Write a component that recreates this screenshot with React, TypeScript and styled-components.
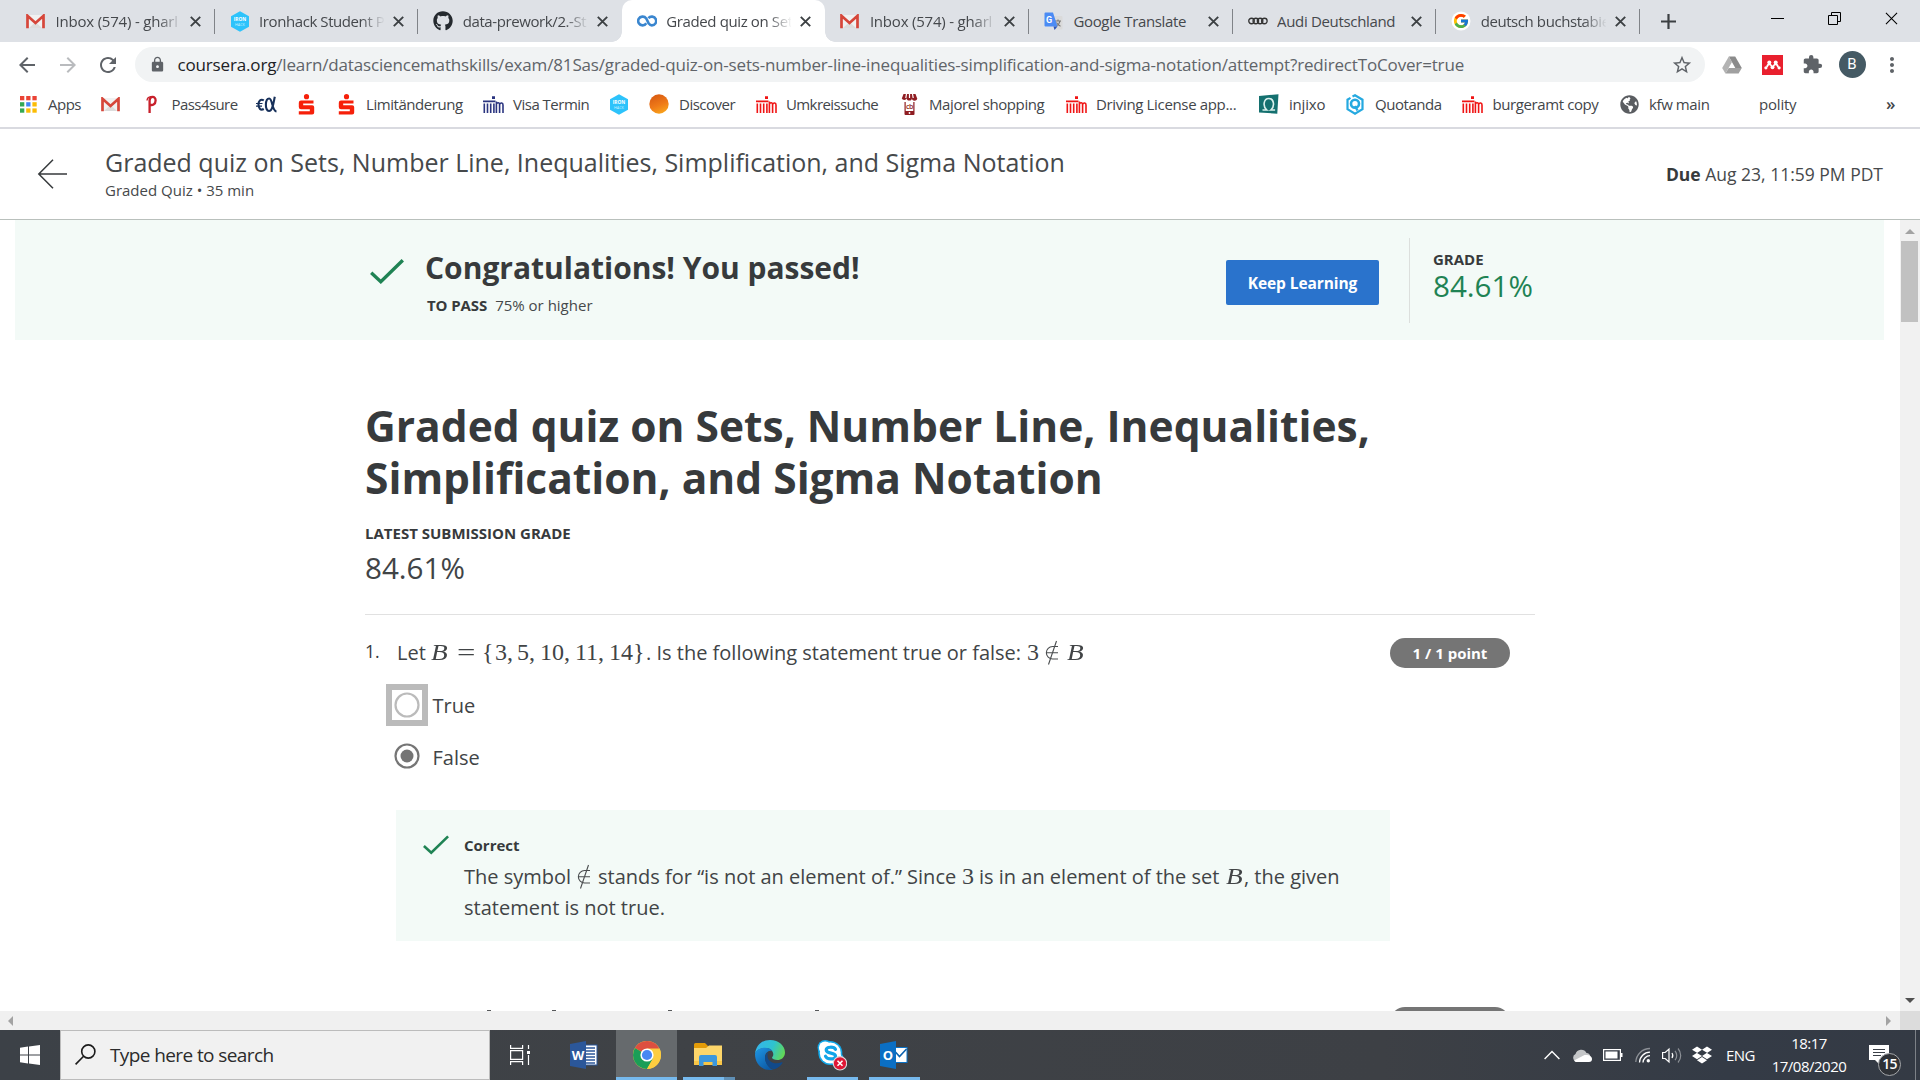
import React from "react";
import styled, { createGlobalStyle, css } from "styled-components";
import { FaGithub, FaDropbox, FaGlobeAmericas } from "react-icons/fa";
import { FcGoogle } from "react-icons/fc";
import { MdExtension, MdLock, MdStarBorder, MdRefresh, MdArrowBack, MdArrowForward, MdMoreVert } from "react-icons/md";

const GlobalStyle = createGlobalStyle`
  * { box-sizing: border-box; }
  html, body { margin: 0; padding: 0; overflow: hidden; background: #fff; }
  body { font-family: "Open Sans", "Noto Sans", sans-serif; color: #373a3c; }
  svg { display: block; flex: none; }
`;

const Screen = styled.div`
  width: 1920px;
  height: 1080px;
  display: flex;
  flex-direction: column;
  overflow: hidden;
`;

/* ---------- browser chrome ---------- */

const TabStrip = styled.div`
  display: flex;
  height: 42px;
  padding-left: 11px;
  background: #dee1e6;
  flex: none;
`;

const Tab = styled.div<{ $active?: boolean; $divider?: boolean }>`
  position: relative;
  display: flex;
  align-items: center;
  width: 203.6px;
  height: 42px;
  padding: 0 14px 0 15px;
  ${(p) =>
    p.$divider &&
    css`
      &::after {
        content: "";
        position: absolute;
        right: 0;
        top: 9px;
        width: 1px;
        height: 25px;
        background: #808388;
      }
    `}
  ${(p) =>
    p.$active &&
    css`
      background: #fff;
      border-radius: 10px 10px 0 0;
      &::before,
      &::after {
        content: "";
        position: absolute;
        bottom: 0;
        width: 10px;
        height: 10px;
      }
      &::before {
        left: -10px;
        background: radial-gradient(circle at 0 0, transparent 9.5px, #fff 10px);
      }
      &::after {
        right: -10px;
        background: radial-gradient(circle at 100% 0, transparent 9.5px, #fff 10px);
      }
    `}
`;

const TabIcon = styled.span`
  display: flex;
  width: 20px;
`;

const TabTitle = styled.span<{ $ls: number; $fade?: boolean }>`
  width: 125px;
  margin-left: 9.5px;
  overflow: hidden;
  white-space: nowrap;
  font-size: 15px;
  line-height: 24px;
  letter-spacing: ${(p) => p.$ls}px;
  color: #45484c;
  ${(p) => p.$fade && "mask-image: linear-gradient(90deg, #000 102px, transparent 126px);"}
`;

const TabClose = styled.div`
  margin-left: auto;
`;

const NewTab = styled.div`
  display: flex;
  align-items: center;
  width: 56px;
  padding-left: 21px;
`;

const WindowControls = styled.div`
  display: flex;
  margin-left: auto;
  height: 37px;
`;

const WindowButton = styled.div`
  display: flex;
  align-items: center;
  justify-content: center;
  width: 57px;
`;

const Toolbar = styled.div`
  display: flex;
  align-items: center;
  height: 45px;
  padding: 0 8px 0 15px;
  flex: none;
  color: #5f6368;
`;

const NavIcons = styled.div`
  display: flex;
  gap: 16.5px;
  width: 120px;
`;

const Omnibox = styled.div`
  display: flex;
  align-items: center;
  width: 1570px;
  height: 35px;
  padding: 0 12px 0 14px;
  border-radius: 18px;
  background: #f1f3f4;
`;

const Url = styled.div`
  flex: 1;
  margin-left: 11.5px;
  font-size: 17px;
  line-height: 26px;
  letter-spacing: -0.16px;
  white-space: nowrap;
  color: #606469;
  b {
    font-weight: 400;
    color: #202124;
  }
`;

const Extensions = styled.div`
  display: grid;
  grid-template-columns: repeat(5, 40px);
  align-items: center;
  justify-items: center;
  margin-left: 7px;
`;

const Avatar = styled.div`
  width: 27px;
  height: 27px;
  border-radius: 50%;
  background: #455a64;
  color: #fff;
  font: 15px/27px Roboto, sans-serif;
  text-align: center;
`;

const Bookmarks = styled.div`
  display: flex;
  align-items: center;
  height: 42px;
  padding: 0 0 6px 18px;
  border-bottom: 2px solid #d9dae0;
  flex: none;
`;

const Bookmark = styled.div<{ $w: number; $ls: number }>`
  display: flex;
  align-items: center;
  gap: 10px;
  width: ${(p) => p.$w}px;
  flex: none;
  font-size: 15px;
  line-height: 24px;
  letter-spacing: ${(p) => p.$ls}px;
  color: #43464a;
  white-space: nowrap;
`;

const BookmarkIcon = styled.span`
  display: flex;
  justify-content: center;
  width: 20px;
`;

const MoreBookmarks = styled.div`
  font-size: 17px;
  line-height: 22px;
  font-weight: 600;
  color: #43464a;
`;

/* ---------- page ---------- */

const PageHeader = styled.header`
  display: flex;
  align-items: center;
  height: 91px;
  padding: 0 37px 0 37px;
  border-bottom: 1px solid #b9c0bc;
  flex: none;
`;

const HeaderTitles = styled.div`
  margin-left: 38px;
  padding-bottom: 4px;
`;

const HeaderTitle = styled.div`
  font-size: 25px;
  line-height: 34px;
  letter-spacing: -0.005px;
  color: #46494b;
  white-space: nowrap;
`;

const HeaderSub = styled.div`
  margin-top: 1px;
  font-size: 15px;
  line-height: 20px;
  color: #46494b;
`;

const Due = styled.div`
  margin-left: auto;
  font-size: 17.5px;
  line-height: 26px;
  white-space: nowrap;
  color: #46494b;
  b {
    font-weight: 700;
    color: #373a3c;
  }
`;

const Viewport = styled.div`
  display: grid;
  grid-template-columns: 1900px 20px;
  height: 791px;
  flex: none;
  overflow: hidden;
`;

const Page = styled.main`
  height: 791px;
  overflow: hidden;
`;

const Banner = styled.section`
  display: flex;
  width: 1869px;
  height: 120px;
  margin-left: 15px;
  padding-left: 355px;
  background: #f3faf7;
`;

const BannerCheck = styled.div`
  padding-top: 39px;
  width: 55px;
`;

const BannerText = styled.div`
  width: 801px;
  padding-top: 28px;
`;

const BannerTitle = styled.h2`
  margin: 0;
  font-size: 30px;
  line-height: 40px;
  font-weight: 700;
  letter-spacing: -0.01px;
`;

const PassLine = styled.div`
  display: flex;
  gap: 8px;
  margin: 7px 0 0 2px;
  font-size: 15px;
  line-height: 20px;
  b {
    font-weight: 700;
    letter-spacing: -0.1px;
  }
  span {
    color: #46494b;
  }
`;

const KeepLearning = styled.button`
  width: 153px;
  height: 45px;
  margin: 40px 30px 0 0;
  padding: 1px 0 0;
  border: 0;
  border-radius: 2px;
  background: #2a73cc;
  color: #fff;
  font: 700 15.5px/44px "Open Sans", sans-serif;
  letter-spacing: -0.08px;
  white-space: nowrap;
`;

const GradeBox = styled.div`
  height: 85px;
  margin-top: 18px;
  padding: 11px 0 0 23px;
  border-left: 1px solid #dcdfdd;
`;

const Label = styled.div`
  font-size: 15px;
  line-height: 20px;
  font-weight: 700;
  white-space: nowrap;
`;

const GradeValue = styled.div<{ $green?: boolean }>`
  font-size: 29.6px;
  line-height: 34px;
  font-weight: 400;
  color: ${(p) => (p.$green ? "#1f8354" : "#414446")};
`;

const Content = styled.section`
  width: 1170px;
  margin-left: 365px;
  padding-top: 60px;
`;

const QuizTitle = styled.h1`
  margin: 0 0 19px;
  font-size: 42.5px;
  line-height: 52px;
  font-weight: 700;
  white-space: nowrap;
`;

const Submission = styled.div`
  height: 92px;
  border-bottom: 1px solid #e1e1e1;
  ${GradeValue} {
    margin-top: 8px;
  }
`;

const QuestionRow = styled.div`
  display: flex;
  height: 31px;
  margin-top: 22px;
`;

const QuestionNumber = styled.div`
  width: 32px;
  font-size: 17.5px;
  line-height: 29px;
`;

const Line = styled.div`
  display: flex;
  align-items: baseline;
  height: 31px;
  font-size: 20px;
  line-height: 31px;
  color: #414446;
  white-space: pre;
`;

const Words = styled.span<{ $w: number }>`
  width: ${(p) => p.$w}px;
  flex: none;
`;

const MathText = styled.span<{ $w: number; $italic?: boolean; $wide?: boolean }>`
  width: ${(p) => p.$w}px;
  flex: none;
  font-family: "Liberation Serif", "DejaVu Serif", serif;
  font-size: 24px;
  line-height: 31px;
  font-style: ${(p) => (p.$italic ? "italic" : "normal")};
  ${(p) => p.$italic && "transform: scaleX(1.14); transform-origin: 0 50%;"}
  ${(p) => p.$wide && "transform: scaleX(1.36); transform-origin: 0 50%;"}
`;

const Symbol = styled.span<{ $w: number }>`
  width: ${(p) => p.$w}px;
  flex: none;
  align-self: center;
`;

const Pill = styled.div`
  width: 120px;
  height: 30px;
  margin: 1px 25px 0 auto;
  border-radius: 15px;
  background: #757575;
  color: #fff;
  font-size: 15px;
  line-height: 30px;
  font-weight: 700;
  text-align: center;
  flex: none;
`;

const Option = styled.label<{ $gap: number }>`
  display: flex;
  align-items: center;
  height: 42px;
  margin: ${(p) => p.$gap}px 0 0 21px;
  font-size: 20px;
  color: #414446;
`;

const OptionText = styled.span<{ $drop?: boolean }>`
  padding-top: ${(p) => (p.$drop ? 2 : 0)}px;
`;

const RadioFrame = styled.span<{ $focused?: boolean }>`
  display: flex;
  align-items: center;
  justify-content: center;
  width: 42px;
  height: 42px;
  margin-right: 4.5px;
  border: 6px solid ${(p) => (p.$focused ? "#bbbbbb" : "transparent")};
`;

const Feedback = styled.div`
  display: flex;
  width: 994px;
  height: 131px;
  margin: 33px 0 66px 31px;
  padding: 23px 0 0 27px;
  background: #f3faf7;
`;

const FeedbackCheck = styled.div`
  width: 41px;
  padding-top: 2px;
`;

const FeedbackTitle = styled.div`
  margin-bottom: 4px;
  font-size: 15px;
  line-height: 24px;
  font-weight: 700;
`;

const NextQuestion = styled.div`
  display: flex;
  align-items: flex-start;
  ${Pill} {
    margin-top: 0;
  }
`;

const AscenderTips = styled.div`
  display: flex;
  padding-top: 3px;
`;

const Tip = styled.span<{ $gap: number }>`
  width: 4px;
  height: 1px;
  margin-left: ${(p) => p.$gap}px;
  background: #57595b;
`;

const VScroll = styled.div`
  display: flex;
  flex-direction: column;
  align-items: center;
  padding: 9px 1px 8px 0;
  background: #f1f1f1;
`;

const VThumb = styled.div`
  width: 17px;
  height: 81px;
  margin: 7px 0 auto;
  background: #c1c1c1;
`;

const HScroll = styled.div`
  display: flex;
  align-items: center;
  justify-content: space-between;
  height: 19px;
  padding-left: 8px;
  background: #f0f0f0;
  flex: none;
`;

const ScrollCorner = styled.div`
  display: flex;
  align-items: center;
  gap: 9px;
  &::after {
    content: "";
    width: 20px;
    height: 19px;
    background: #dcdcdc;
  }
`;

/* ---------- taskbar ---------- */

const Taskbar = styled.footer`
  display: flex;
  height: 50px;
  flex: none;
  background: linear-gradient(90deg, #3c4147 0, #3f4246 35%, #3d4045 72%, #343b46 90%, #343a44 100%);
`;

const Start = styled.div`
  display: flex;
  align-items: center;
  justify-content: center;
  width: 60px;
`;

const SearchBox = styled.div`
  display: flex;
  align-items: center;
  width: 430px;
  padding: 0 0 1px 14px;
  background: #f1f1f1;
  border: 1px solid #bcbcbc;
  font-size: 19px;
  color: #2b2b2b;
  letter-spacing: -0.6px;
  span {
    margin-left: 14px;
  }
`;

const TaskItem = styled.div<{ $w: number; $active?: boolean; $open?: number }>`
  position: relative;
  display: flex;
  align-items: center;
  justify-content: center;
  width: ${(p) => p.$w}px;
  ${(p) => p.$active && "background: #666a6d;"}
  &::after {
    content: "";
    position: absolute;
    bottom: 0;
    width: ${(p) => p.$open ?? 0}px;
    height: 3px;
    background: #76b9ed;
  }
`;

const StackedEdge = styled.span`
  position: absolute;
  right: 4px;
  bottom: 0;
  width: 11px;
  height: 3px;
  background: #5f8fb5;
  z-index: 1;
`;

const Tray = styled.div`
  display: flex;
  align-items: center;
  margin-left: auto;
  color: #fff;
`;

const TrayIcon = styled.div<{ $w: number }>`
  display: flex;
  width: ${(p) => p.$w}px;
`;

const Lang = styled.div`
  width: 45px;
  font-size: 15px;
  letter-spacing: -0.6px;
`;

const Clock = styled.div`
  width: 76px;
  font-size: 15px;
  line-height: 23px;
  text-align: center;
  letter-spacing: -0.5px;
  white-space: nowrap;
`;

const Notifications = styled.div`
  position: relative;
  width: 46px;
  margin-left: 22px;
`;

const Badge = styled.span`
  position: absolute;
  left: 9px;
  top: 8px;
  width: 23px;
  height: 23px;
  border: 1px solid #a5a7aa;
  border-radius: 50%;
  background: #2f3237;
  font-size: 14px;
  line-height: 20px;
  font-weight: 600;
  letter-spacing: -0.8px;
  text-align: center;
`;

const ShowDesktop = styled.div`
  width: 5px;
  height: 50px;
  border-left: 1px solid #7d8187;
`;

/* ---------- drawings ---------- */

const Gmail = () => (
  <svg width="19" height="15" viewBox="0 0 19 15">
    <path d="M2 1h15v13H2z" fill="#f1f1f1" />
    <path d="M3 14l6.500-6L16 14z" fill="#dcdcdc" />
    <path d="M1.500 14.200V1.800L9.500 9l8-7.200v12.400" fill="none" stroke="#d6463a" strokeWidth="2.700" />
  </svg>
);

const Ironhack = () => (
  <svg width="20" height="21" viewBox="0 0 20 21">
    <path d="M10 .3l9 5v10.400l-9 5-9-5V5.300z" fill="#2dc3fb" />
    <text x="10" y="10" fontSize="4.800" fontWeight="700" textAnchor="middle" fill="#fff" fontFamily="Open Sans">IRON</text>
    <text x="10" y="14.800" fontSize="3.800" textAnchor="middle" fill="#c9f0ff" fontFamily="Open Sans">HACK</text>
  </svg>
);

const Coursera = () => (
  <svg width="20" height="12" viewBox="0 0 20 12" fill="none" stroke="#3a86cf" strokeWidth="2.600">
    <path d="M9.300 8.200C8.400 9.600 7 10.400 5.600 10.400a4.400 4.400 0 1 1 3.600-6.900c.9 1.300 1.600 3.500 2.600 5 1 1.400 2 1.900 3 1.900a4.400 4.400 0 1 0-3.400-7.200" />
  </svg>
);

const Translate = () => (
  <svg width="19" height="19" viewBox="0 0 19 19">
    <path d="M7 4h10.500a1 1 0 0 1 1 1v11.500a1 1 0 0 1-1 1H11z" fill="#dadada" />
    <path d="M11 9h6M14 7.500V9M16 9c-.5 2.500-2 4-4 5M12.500 10.500c.7 1.500 2 3 4 3.800" stroke="#777" strokeWidth="1.100" fill="none" />
    <path d="M1.500.5H9l4.500 14H1.500a1 1 0 0 1-1-1v-12a1 1 0 0 1 1-1z" fill="#4b8bf4" />
    <path d="M9.500 14.500h4L10.500 18z" fill="#2b56b8" />
    <text x="2" y="11" fontSize="9" fontWeight="700" fill="#fff" fontFamily="Roboto">G</text>
  </svg>
);

const Audi = () => (
  <svg width="20" height="8" viewBox="0 0 21 8" fill="none" stroke="#333" strokeWidth="1.400">
    <circle cx="3.700" cy="4" r="2.900" />
    <circle cx="8.200" cy="4" r="2.900" />
    <circle cx="12.700" cy="4" r="2.900" />
    <circle cx="17.200" cy="4" r="2.900" />
  </svg>
);

const GoogleDisc = () => (
  <svg width="20" height="20" viewBox="0 0 20 20">
    <circle cx="10" cy="10" r="9.500" fill="#fff" />
    <g transform="translate(1.500 1.500)">
      <FcGoogle size={17} />
    </g>
  </svg>
);

const Cross = ({ size = 11, w = 1.9, color = "#3c4043" }) => (
  <svg width={size} height={size} viewBox="0 0 11 11">
    <path d="M.8.8l9.400 9.400M10.200.8L.8 10.200" stroke={color} strokeWidth={w} />
  </svg>
);

const AppsGrid = () => (
  <svg width="17" height="17" viewBox="0 0 17 17">
    {["#ea4335", "#ea4335", "#ea4335", "#34a853", "#4285f4", "#fbbc05", "#34a853", "#fbbc05", "#fbbc05"].map((c, i) => (
      <rect key={i} x={(i % 3) * 6.2} y={Math.floor(i / 3) * 6.2} width="4.300" height="4.300" fill={c} />
    ))}
  </svg>
);

const PassLogo = () => (
  <svg width="12" height="19" viewBox="0 0 12 19" fill="none" stroke="#c8202b">
    <path d="M3.600 18V5.500C3.600 .8 9.600 .6 9.600 5.500c0 4.200-3.600 5.200-5.600 4" strokeWidth="2.300" />
    <path d="M1 5.500C1.200 3 2.500 1.800 5 1.600" strokeWidth="1.400" />
  </svg>
);

const EuroAlpha = () => (
  <svg width="21" height="17" viewBox="0 0 21 17" fill="none" stroke="#17305a">
    <path d="M7.800 4.400C4.500 2.400 2.500 5.500 2.500 8.600s1.800 6.400 5.300 4.400" strokeWidth="2.100" />
    <path d="M0 7.500h6.500M0 10.100h6" strokeWidth="1.200" />
    <path d="M18.800.8C17.600 6 16.800 15 13 15 8.600 15 9 2.500 13.200 2.500c3.300 0 2.800 12.500 7.300 13" strokeWidth="2.100" />
  </svg>
);

const Sparkasse = () => (
  <svg width="17" height="21" viewBox="0 0 17 21" fill="#f6200a">
    <circle cx="8.500" cy="2.700" r="2.600" />
    <path d="M3 6.500h12.500v3H5.200v1.700h9a2 2 0 0 1 2 2v5.300a2 2 0 0 1-2 2H.8v-3.200h11v-2H3a2.200 2.200 0 0 1-2.200-2.200V8.700A2.200 2.200 0 0 1 3 6.500z" />
  </svg>
);

const Gate = ({ color }: { color: string }) => (
  <svg width="21" height="17" viewBox="0 0 21 17">
    <path d="M0 4.500h12.500v1.800H0zM9 .3h3v2.600H9zM.5 7.500h1.600V17H.5zM3.700 7.500h1.600V17H3.700zM6.900 7.500h1.600V17H6.900zM10.100 7.500h1.600V17h-1.600z" fill={color} />
    <path d="M13.400 17V5.500M13.400 8c.8-1.800 3.200-1.700 3.200.6V17M16.700 8.300c.8-2 3.300-1.700 3.300.6V17" fill="none" stroke={color} strokeWidth="1.600" />
  </svg>
);

const OrangeBall = () => (
  <svg width="20" height="20" viewBox="0 0 20 20">
    <defs>
      <linearGradient id="ball" x1="0.300" y1="0" x2="0.700" y2="1">
        <stop offset="0" stopColor="#d95b12" />
        <stop offset="0.550" stopColor="#ef7a18" />
        <stop offset="1" stopColor="#f9a61c" />
      </linearGradient>
    </defs>
    <circle cx="10" cy="10" r="9.700" fill="url(#ball)" />
  </svg>
);

const ShopPhone = () => (
  <svg width="17" height="21" viewBox="0 0 17 21">
    <path d="M2.500 0h12l1.700 4.500H.8z" fill="#8f1d22" />
    <path d="M5.500 0L4.700 4.500M8.500 0v4.500M11.500 0l.8 4.500" stroke="#fff" strokeWidth="1.200" />
    <path d="M.8 4a2.500 2.500 0 0 0 4.900 0 2.500 2.500 0 0 0 5.200 0 2.500 2.500 0 0 0 5.300 0z" fill="#8f1d22" />
    <path d="M3.500 8h1.200v9h7.600V8h1.200v12a1 1 0 0 1-1 1h-8a1 1 0 0 1-1-1z" fill="#8f1d22" />
    <circle cx="8.500" cy="19" r=".9" fill="#fff" />
    <text x="8.500" y="15" fontSize="7" fontWeight="600" textAnchor="middle" fill="#8f1d22" fontFamily="Open Sans">cb</text>
  </svg>
);

const Injixo = () => (
  <svg width="20" height="20" viewBox="0 0 20 20">
    <path d="M0 2l19.500-1.800-1.200 19.500L0 18.500z" fill="#14706f" />
    <path d="M3.500 16h4.300C3.500 12.500 4.500 4.500 9.800 4.500s6.300 8 2 11.500h4.300" fill="none" stroke="#d9efec" strokeWidth="1.600" />
  </svg>
);

const Quotanda = () => (
  <svg width="20" height="21" viewBox="0 0 20 21" fill="none" stroke="#25a9e0">
    <path d="M7.500 2.500L10 1.300l7.500 4.400v9.400L10 19.600l-7.500-4.400V5.700l3-1.800" strokeWidth="2.200" />
    <circle cx="10" cy="9.800" r="4" strokeWidth="2.600" />
    <path d="M10 12l2.500 4.500" strokeWidth="2.400" />
  </svg>
);

const Drive = () => (
  <svg width="20" height="18" viewBox="0 0 20 18">
    <path d="M6.800.5h6.400L19.800 12H13.300z" fill="#8b8b8b" />
    <path d="M6.800.5L.2 12l3.200 5.500L10 6z" fill="#b3b3b3" />
    <path d="M3.400 17.500L6.700 12h13.100l-3.200 5.500z" fill="#a0a0a0" />
  </svg>
);

const Mendeley = () => (
  <svg width="21" height="20" viewBox="0 0 21 20">
    <rect width="21" height="20" fill="#e9202e" />
    <g fill="#fff">
      <circle cx="7.300" cy="7.500" r="2" />
      <circle cx="13.700" cy="7.500" r="2" />
      <circle cx="3.900" cy="12.800" r="1.600" />
      <circle cx="17.100" cy="12.800" r="1.600" />
      <circle cx="10.500" cy="12.300" r="1.900" />
    </g>
    <path d="M5 12c.3-1.500 1.200-2.600 2.300-2.600s2 .9 2.400 2M11.300 11.400c.4-1.100 1.300-2 2.400-2s2 1.100 2.300 2.600" fill="none" stroke="#fff" strokeWidth="1.800" />
  </svg>
);

const Check = ({ w, h }: { w: number; h: number }) => (
  <svg width={w} height={h} viewBox="0 0 34 25" fill="none" stroke="#1f8354" strokeWidth="3.400">
    <path d="M1.200 13.800l9.600 8.900L32.800 1.300" />
  </svg>
);

const NotIn = () => (
  <svg width="14" height="25" viewBox="0 0 14 25" fill="none" stroke="#4a4d4f" strokeWidth="1.100">
    <path d="M13 6.500H7.600a6 6 0 0 0 0 12.500H13M1.700 12.700H13M11.500 1L3.500 24.500" />
  </svg>
);

const Radio = ({ checked }: { checked?: boolean }) => (
  <svg width="26" height="26" viewBox="0 0 26 26">
    <circle cx="13" cy="13" r="11.500" fill="#fff" stroke={checked ? "#757575" : "#bbbbbb"} strokeWidth="2.200" />
    {checked && <circle cx="13" cy="13" r="6.500" fill="#757575" />}
  </svg>
);

const Arrow = ({ dir, color }: { dir: "up" | "down" | "left" | "right"; color: string }) => {
  const d = { up: "M0 5h10L5 0z", down: "M0 0h10L5 5z", left: "M5 0v10L0 5z", right: "M0 0v10l5-5z" }[dir];
  const flat = dir === "up" || dir === "down";
  return (
    <svg width={flat ? 10 : 5} height={flat ? 5 : 10}>
      <path d={d} fill={color} />
    </svg>
  );
};

const TaskView = () => (
  <svg width="22" height="20" viewBox="0 0 22 20" fill="none" stroke="#fff" strokeWidth="1.200">
    <path d="M.6 0v3.400h12V0M.6 20v-3.400h12V20M.6 5.600h12v8.800H.6zM18.500 0v4M18.500 10v10" />
    <rect x="17" y="6" width="3" height="3" fill="#fff" stroke="none" />
  </svg>
);

const OfficeDoc = ({ letter, mail }: { letter: string; mail?: boolean }) => (
  <svg width="28" height="28" viewBox="0 0 28 28">
    {mail ? (
      <>
        <rect x="14" y="6" width="13.500" height="16" fill="#0b72c6" />
        <rect x="15" y="7" width="11.500" height="14" fill="#fff" />
        <path d="M15 10.500l4.500 5L26.500 8" fill="none" stroke="#0b62b0" strokeWidth="1.600" />
      </>
    ) : (
      <>
        <rect x="14" y="4" width="13" height="20" fill="#fff" stroke="#2b579a" />
        <path d="M15 7h10M15 10h10M15 13h10M15 16h10M15 19h10M15 22h10" stroke="#2b579a" strokeWidth="1.300" />
      </>
    )}
    <path d="M0 3l16-3v28L0 25z" fill={mail ? "#0b6fc4" : "#2b579a"} />
    <text x="8" y="18.500" fontSize="13" fontWeight="700" textAnchor="middle" fill="#fff" fontFamily="Open Sans">{letter}</text>
  </svg>
);

const Chrome = () => (
  <svg width="28" height="28" viewBox="0 0 28 28">
    <circle cx="14" cy="14" r="14" fill="#fdcd40" />
    <path d="M14 14L1.900 7A14 14 0 0 1 26.400 7.500z" fill="#dd4f40" />
    <path d="M1.900 7A14 14 0 0 0 14 28l6-10.500L14 14z" fill="#1b9e57" />
    <path d="M14 7.500h12.400A14 14 0 0 1 14 28l6-10.500z" fill="#fdcd40" />
    <circle cx="14" cy="14" r="6.600" fill="#fff" />
    <circle cx="14" cy="14" r="5.100" fill="#4787f3" />
  </svg>
);

const Explorer = () => (
  <svg width="28" height="24" viewBox="0 0 28 24">
    <path d="M0 1.500A1.500 1.500 0 0 1 1.500 0H11l3 3v5H0z" fill="#e39b07" />
    <path d="M0 5h12l3-2.500h13V22H0z" fill="#fdd66a" />
    <path d="M0 18h28v4H0z" fill="#f9c647" />
    <path d="M5 23V14a2 2 0 0 1 2-2h14a2 2 0 0 1 2 2v9h-4.500v-4h-9v4z" fill="#3c97dd" />
  </svg>
);

const Edge = () => (
  <svg width="30" height="30" viewBox="0 0 30 30">
    <defs>
      <linearGradient id="edgeTop" x1="0" y1="0.300" x2="1" y2="0.600">
        <stop offset="0" stopColor="#35b5ec" />
        <stop offset="0.550" stopColor="#2fc3cf" />
        <stop offset="1" stopColor="#63d854" />
      </linearGradient>
      <linearGradient id="edgeLow" x1="0" y1="0" x2="0.700" y2="1">
        <stop offset="0" stopColor="#1f97e5" />
        <stop offset="1" stopColor="#0c59a4" />
      </linearGradient>
    </defs>
    <path d="M0 14C1 5 7 0 15 0c9 0 15 6 15 12.500 0 5-4 7.500-7.500 7.500-3 0-5.500-1-5.500-2.200 0-.8 1.300-1.300 1.300-3.600C18.300 11 15 8 10.500 8 5 8 1 11 0 14z" fill="url(#edgeTop)" />
    <path d="M0 14c1-3.500 5-6.200 10-6.200 3 0 6 1.200 7.500 3.200-4-1.500-7.500 2-7.500 6C10 23 15 30 19 29.500 9 32 0 25 0 14z" fill="url(#edgeLow)" />
    <path d="M13.500 12c-2 1.200-3.500 3.500-3.500 6 0 6 5 11 9.500 11.300 4-1.300 6.500-3.800 8-6.300.3-.6-.2-1-.8-.7C20 25 12 22 12.500 15c.1-1.200.5-2.200 1-3z" fill="#114a8b" />
  </svg>
);

const Skype = () => (
  <svg width="30" height="32" viewBox="0 0 30 32">
    <g fill="#12a9ea">
      <circle cx="8.200" cy="8.700" r="7.700" />
      <circle cx="13.300" cy="14" r="12" />
      <circle cx="19" cy="19.500" r="7.500" />
    </g>
    <g fill="#fff">
      <circle cx="8.200" cy="8.700" r="6.300" />
      <circle cx="13.300" cy="14" r="10.500" />
      <circle cx="19" cy="19.500" r="6" />
    </g>
    <path d="M18.500 10.300c-1.200-2.600-9.300-3.200-9.300.8 0 4.200 9.300 1.900 9.300 5.900 0 4.200-8.700 3.600-10 .2" fill="none" stroke="#12a5e8" strokeWidth="3.200" strokeLinecap="round" />
    <circle cx="23" cy="24.300" r="6.700" fill="#e01735" stroke="#d9dbdc" strokeWidth="1.100" />
    <path d="M20.500 21.800l5 5M25.500 21.800l-5 5" stroke="#fff" strokeWidth="1.600" />
  </svg>
);

/* ---------- data ---------- */

const tabs = [
  { icon: <Gmail />, title: "Inbox (574) - gharl", ls: -0.2, fade: true, divider: true },
  { icon: <Ironhack />, title: "Ironhack Student P", ls: -0.42, fade: true, divider: true },
  { icon: <FaGithub size={20} color="#24292e" />, title: "data-prework/2.-St", ls: -0.4, fade: true },
  { icon: <Coursera />, title: "Graded quiz on Set", ls: -0.38, fade: true, active: true },
  { icon: <Gmail />, title: "Inbox (574) - gharl", ls: -0.2, fade: true, divider: true },
  { icon: <Translate />, title: "Google Translate", ls: -0.35, divider: true },
  { icon: <Audi />, title: "Audi Deutschland", ls: -0.33, divider: true },
  { icon: <GoogleDisc />, title: "deutsch buchstabie", ls: -0.42, fade: true, divider: true },
];

const bookmarks = [
  { icon: <AppsGrid />, text: "Apps", w: 82.5, ls: -0.5 },
  { icon: <Gmail />, text: "", w: 41, ls: 0 },
  { icon: <PassLogo />, text: "Pass4sure", w: 114.5, ls: -0.57 },
  { icon: <EuroAlpha />, text: "", w: 40, ls: 0 },
  { icon: <Sparkasse />, text: "", w: 40, ls: 0 },
  { icon: <Sparkasse />, text: "Limitänderung", w: 147, ls: -0.45 },
  { icon: <Gate color="#2b3580" />, text: "Visa Termin", w: 126, ls: -0.5 },
  { icon: <Ironhack />, text: "", w: 40, ls: 0 },
  { icon: <OrangeBall />, text: "Discover", w: 107, ls: -0.5 },
  { icon: <Gate color="#f01414" />, text: "Umkreissuche", w: 143, ls: -0.6 },
  { icon: <ShopPhone />, text: "Majorel shopping", w: 167, ls: -0.4 },
  { icon: <Gate color="#f01414" />, text: "Driving License app...", w: 193, ls: -0.34 },
  { icon: <Injixo />, text: "injixo", w: 86, ls: -0.2 },
  { icon: <Quotanda />, text: "Quotanda", w: 117.5, ls: -0.45 },
  { icon: <Gate color="#f01414" />, text: "burgeramt copy", w: 156.5, ls: -0.4 },
  { icon: <FaGlobeAmericas size={19} color="#5a5d61" />, text: "kfw main", w: 110, ls: -0.4 },
  { icon: null, text: "polity", w: 157, ls: -0.2 },
];

export default function App() {
  return (
    <Screen>
      <GlobalStyle />
      <TabStrip>
        {tabs.map((t, i) => (
          <Tab key={i} $active={t.active} $divider={t.divider}>
            <TabIcon>{t.icon}</TabIcon>
            <TabTitle $ls={t.ls} $fade={t.fade}>{t.title}</TabTitle>
            <TabClose><Cross /></TabClose>
          </Tab>
        ))}
        <NewTab>
          <svg width="15" height="15" viewBox="0 0 15 15">
            <path d="M7.500 0v15M0 7.500h15" stroke="#3c4043" strokeWidth="2.200" />
          </svg>
        </NewTab>
        <WindowControls>
          <WindowButton>
            <svg width="13" height="2"><rect width="13" height="1" y="0" fill="#000" /></svg>
          </WindowButton>
          <WindowButton>
            <svg width="13" height="13" fill="none" stroke="#000"><path d="M.5 3.500h9v9h-9zM3.500 3V.5h9v9H10" /></svg>
          </WindowButton>
          <WindowButton><Cross size={13} w={0.9} color="#000" /></WindowButton>
        </WindowControls>
      </TabStrip>

      <Toolbar>
        <NavIcons>
          <MdArrowBack size={24} />
          <MdArrowForward size={24} color="#b9bbbe" />
          <MdRefresh size={24} />
        </NavIcons>
        <Omnibox>
          <MdLock size={17} />
          <Url><b>coursera.org</b>/learn/datasciencemathskills/exam/81Sas/graded-quiz-on-sets-number-line-inequalities-simplification-and-sigma-notation/attempt?redirectToCover=true</Url>
          <MdStarBorder size={22} />
        </Omnibox>
        <Extensions>
          <Drive />
          <Mendeley />
          <MdExtension size={21} />
          <Avatar>B</Avatar>
          <MdMoreVert size={24} />
        </Extensions>
      </Toolbar>

      <Bookmarks>
        {bookmarks.map((b, i) => (
          <Bookmark key={i} $w={b.w} $ls={b.ls}>
            <BookmarkIcon>{b.icon}</BookmarkIcon>
            {b.text}
          </Bookmark>
        ))}
        <MoreBookmarks>»</MoreBookmarks>
      </Bookmarks>

      <PageHeader>
        <svg width="30" height="30" viewBox="0 0 30 30" fill="none" stroke="#373a3c" strokeWidth="1.500">
          <path d="M16 .8L1.800 15 16 29.200M1.800 15H30" />
        </svg>
        <HeaderTitles>
          <HeaderTitle>Graded quiz on Sets, Number Line, Inequalities, Simplification, and Sigma Notation</HeaderTitle>
          <HeaderSub>Graded Quiz • 35 min</HeaderSub>
        </HeaderTitles>
        <Due><b>Due</b> Aug 23, 11:59 PM PDT</Due>
      </PageHeader>

      <Viewport>
        <Page>
          <Banner>
            <BannerCheck><Check w={34} h={25} /></BannerCheck>
            <BannerText>
              <BannerTitle>Congratulations! You passed!</BannerTitle>
              <PassLine><b>TO PASS</b><span>75% or higher</span></PassLine>
            </BannerText>
            <KeepLearning>Keep Learning</KeepLearning>
            <GradeBox>
              <Label>GRADE</Label>
              <GradeValue $green>84.61%</GradeValue>
            </GradeBox>
          </Banner>

          <Content>
            <QuizTitle>Graded quiz on Sets, Number Line, Inequalities,<br />Simplification, and Sigma Notation</QuizTitle>
            <Submission>
              <Label>LATEST SUBMISSION GRADE</Label>
              <GradeValue>84.61%</GradeValue>
            </Submission>

            <QuestionRow>
              <QuestionNumber>1.</QuestionNumber>
              <Line>
                <Words $w={34}>Let</Words>
                <MathText $w={26} $italic>B</MathText>
                <MathText $w={25} $wide>=</MathText>
                <MathText $w={13}>{"{"}</MathText>
                <MathText $w={22}>3,</MathText>
                <MathText $w={23}>5,</MathText>
                <MathText $w={35}>10,</MathText>
                <MathText $w={34}>11,</MathText>
                <MathText $w={24}>14</MathText>
                <MathText $w={13}>{"}"}</MathText>
                <Words $w={381}>. Is the following statement true or false:</Words>
                <MathText $w={18}>3</MathText>
                <Symbol $w={22}><NotIn /></Symbol>
                <MathText $w={20} $italic>B</MathText>
              </Line>
              <Pill>1 / 1 point</Pill>
            </QuestionRow>

            <Option $gap={16}>
              <RadioFrame $focused><Radio /></RadioFrame><OptionText>True</OptionText>
            </Option>
            <Option $gap={9}>
              <RadioFrame><Radio checked /></RadioFrame><OptionText $drop>False</OptionText>
            </Option>

            <Feedback>
              <FeedbackCheck><Check w={26} h={20} /></FeedbackCheck>
              <div>
                <FeedbackTitle>Correct</FeedbackTitle>
                <Line>
                  <Words $w={113}>The symbol</Words>
                  <Symbol $w={21}><NotIn /></Symbol>
                  <Words $w={364}>stands for “is not an element of.” Since</Words>
                  <MathText $w={17}>3</MathText>
                  <Words $w={247}>is in an element of the set</Words>
                  <MathText $w={18} $italic>B</MathText>
                  <Words $w={100}>, the given</Words>
                </Line>
                <Line>statement is not true.</Line>
              </div>
            </Feedback>

            <NextQuestion>
              <AscenderTips>
                <Tip $gap={122} />
                <Tip $gap={61} />
                <Tip $gap={112} />
                <Tip $gap={143} />
              </AscenderTips>
              <Pill />
            </NextQuestion>
          </Content>
        </Page>
        <VScroll>
          <Arrow dir="up" color="#a3a3a3" />
          <VThumb />
          <Arrow dir="down" color="#505050" />
        </VScroll>
      </Viewport>

      <HScroll>
        <Arrow dir="left" color="#a3a3a3" />
        <ScrollCorner><Arrow dir="right" color="#a3a3a3" /></ScrollCorner>
      </HScroll>

      <Taskbar>
        <Start>
          <svg width="20" height="20" viewBox="0 0 20 20" fill="#fff">
            <path d="M0 2.800l8-1.200v8H0zM9 1.400L20 0v9.600H9zM0 10.500h8v8l-8-1.200zM9 10.500h11V20L9 18.600z" />
          </svg>
        </Start>
        <SearchBox>
          <svg width="21" height="21" viewBox="0 0 21 21" fill="none" stroke="#1b1b1b" strokeWidth="1.600">
            <circle cx="13.300" cy="7.500" r="6.600" />
            <path d="M8.600 12.200L.6 20.400" />
          </svg>
          <span>Type here to search</span>
        </SearchBox>
        <TaskItem $w={61}><TaskView /></TaskItem>
        <TaskItem $w={65}><OfficeDoc letter="W" /></TaskItem>
        <TaskItem $w={61} $active $open={61}><Chrome /></TaskItem>
        <TaskItem $w={62} $open={51}><Explorer /><StackedEdge /></TaskItem>
        <TaskItem $w={62}><Edge /></TaskItem>
        <TaskItem $w={62} $open={51}><Skype /></TaskItem>
        <TaskItem $w={62} $open={51}><OfficeDoc letter="O" mail /></TaskItem>
        <Tray>
          <TrayIcon $w={28}>
            <svg width="16" height="10" viewBox="0 0 16 10" fill="none" stroke="#fff" strokeWidth="1.400"><path d="M.6 9L8 1.500 15.400 9" /></svg>
          </TrayIcon>
          <TrayIcon $w={31}>
            <svg width="20" height="13" viewBox="0 0 20 13">
              <path d="M4 12.500A4 4 0 0 1 3.500 5 6 6 0 0 1 14.500 4 4.500 4.500 0 0 1 16 12.500z" fill="#c4c6c8" />
              <path d="M2 11.500L12.500 6c4-.5 7.500 1 7.500 4a3 3 0 0 1-3 3H4.500c-1.200 0-2-.6-2.500-1.500z" fill="#fff" />
            </svg>
          </TrayIcon>
          <TrayIcon $w={32}>
            <svg width="20" height="12" viewBox="0 0 20 12">
              <rect x=".6" y=".6" width="16.800" height="10.800" fill="none" stroke="#fff" strokeWidth="1.200" />
              <rect x="2.500" y="2.500" width="12" height="7" fill="#fff" />
              <rect x="18" y="4" width="1.500" height="4" fill="#fff" />
            </svg>
          </TrayIcon>
          <TrayIcon $w={27}>
            <svg width="16" height="16" viewBox="0 0 16 16" fill="none" stroke="#fff" strokeWidth="1.300">
              <path d="M.8 15A14.200 14.200 0 0 1 15 1.500" stroke="#8c9096" />
              <path d="M4.500 15.500A10.500 10.500 0 0 1 15 5.200M8 15.500a7 7 0 0 1 7-6.800" />
              <circle cx="13.300" cy="13.800" r="1.700" fill="#fff" stroke="none" />
            </svg>
          </TrayIcon>
          <TrayIcon $w={30}>
            <svg width="21" height="17" viewBox="0 0 21 17" fill="none" stroke="#fff" strokeWidth="1.200">
              <path d="M.6 5.500h2.600L7 2v13l-3.800-3.500H.6z" />
              <path d="M10 6c1 1.500 1 3.500 0 5" />
              <path d="M13 3.800c2.300 2.700 2.300 6.700 0 9.400M16 1.500c3.600 4 3.600 10 0 14" stroke="#8c9096" />
            </svg>
          </TrayIcon>
          <TrayIcon $w={34}><FaDropbox size={20} /></TrayIcon>
          <Lang>ENG</Lang>
          <Clock>18:17<br />17/08/2020</Clock>
          <Notifications>
            <svg width="20" height="20" viewBox="0 0 20 20">
              <path d="M0 0h20v15H10v4l-4-4H0z" fill="#fff" />
              <path d="M4 4.500h12M4 7.500h12M4 10.500h8" stroke="#3a3f47" strokeWidth="1.200" />
            </svg>
            <Badge>15</Badge>
          </Notifications>
          <ShowDesktop />
        </Tray>
      </Taskbar>
    </Screen>
  );
}
